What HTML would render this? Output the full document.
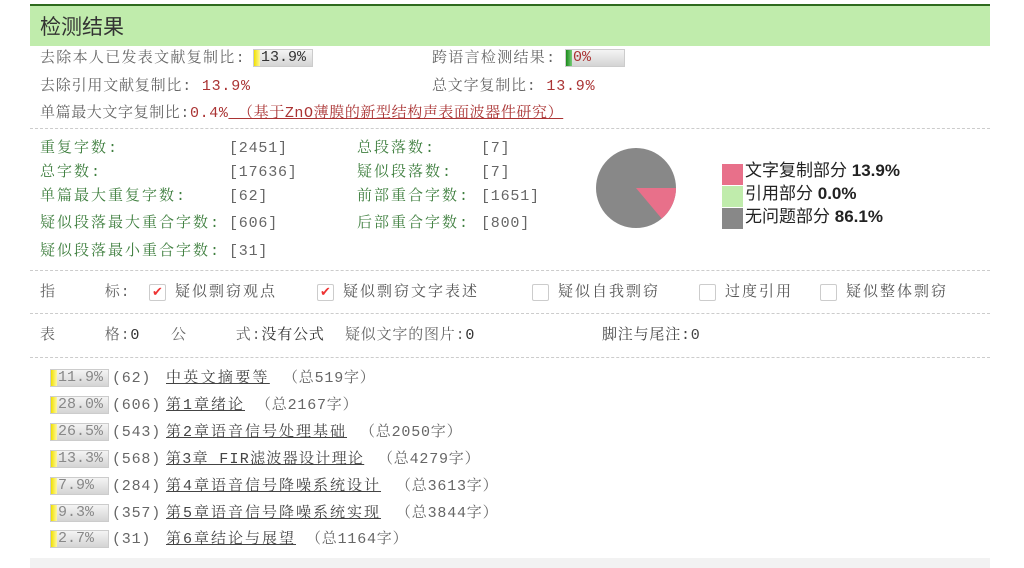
<!DOCTYPE html>
<html><head><meta charset="utf-8"><style>
body{margin:0;width:1024px;height:568px;background:#fff;position:relative;overflow:hidden;font-family:"Liberation Mono","Noto Serif CJK SC",serif;font-size:15px;letter-spacing:0.8px;color:#666}
.a{position:absolute;white-space:nowrap;line-height:18px;margin-top:1px}
.hdr{position:absolute;left:30px;top:4px;width:960px;height:40px;background:#c0ecac;border-top:2px solid #2e6b1e}
.hdr span{position:absolute;left:10px;top:5px;font-size:21px;color:#333;letter-spacing:0;font-family:"Liberation Sans","Noto Sans CJK SC",sans-serif}
.dash{position:absolute;left:30px;width:960px;border-top:1px dashed #ccc}
.red{color:#a33}
.g{color:#3f7f3f}
.bar{position:absolute;height:18px;background:linear-gradient(#f4f4f4,#d4d4d4);border:1px solid #ccc;box-sizing:border-box;color:#888;font-size:15px;line-height:16px;letter-spacing:0}
.bar i{position:absolute;left:0;top:0;bottom:0;width:6px;background:linear-gradient(90deg,#f0e000,#fff8a0)}
.bar b{position:relative;font-weight:normal;padding-left:7px}
.cb{position:absolute;width:17px;height:17px;border:1px solid #ccc;border-radius:2px;box-sizing:border-box;background:#fff}
.u{text-decoration:underline;color:#444;letter-spacing:2px}
</style></head><body>
<div class="hdr"><span>检测结果</span></div>
<div class="a" style="left:40px;top:49px;letter-spacing:1.3px">去除本人已发表文献复制比:</div>
<div class="bar" style="left:253px;top:49px;width:60px"><i></i><b style="color:#333">13.9%</b></div>
<div class="a" style="left:432px;top:49px;letter-spacing:1.3px">跨语言检测结果:</div>
<div class="bar" style="left:565px;top:49px;width:60px"><i style="background:linear-gradient(90deg,#1a8a1a,#7c7)"></i><b class="red">0%</b></div>
<div class="a" style="left:40px;top:77px">去除引用文献复制比: <span class="red">13.9%</span></div>
<div class="a" style="left:432px;top:77px">总文字复制比: <span class="red">13.9%</span></div>
<div class="a" style="left:40px;top:104px;letter-spacing:0.6px">单篇最大文字复制比:<span class="red">0.4%</span><span class="red" style="text-decoration:underline">  （基于ZnO薄膜的新型结构声表面波器件研究） </span></div>
<div class="dash" style="top:128px"></div>
<div class="a g" style="left:40px;top:139px;letter-spacing:2px">重复字数:</div><div class="a" style="left:229px;top:139px">[2451]</div>
<div class="a g" style="left:40px;top:163px;letter-spacing:2px">总字数:</div><div class="a" style="left:229px;top:163px">[17636]</div>
<div class="a g" style="left:40px;top:187px;letter-spacing:2px">单篇最大重复字数:</div><div class="a" style="left:229px;top:187px">[62]</div>
<div class="a g" style="left:40px;top:214px;letter-spacing:2px">疑似段落最大重合字数:</div><div class="a" style="left:229px;top:214px">[606]</div>
<div class="a g" style="left:40px;top:242px;letter-spacing:2px">疑似段落最小重合字数:</div><div class="a" style="left:229px;top:242px">[31]</div>
<div class="a g" style="left:357px;top:139px;letter-spacing:2px">总段落数:</div><div class="a" style="left:481px;top:139px">[7]</div>
<div class="a g" style="left:357px;top:163px;letter-spacing:2px">疑似段落数:</div><div class="a" style="left:481px;top:163px">[7]</div>
<div class="a g" style="left:357px;top:187px;letter-spacing:2px">前部重合字数:</div><div class="a" style="left:481px;top:187px">[1651]</div>
<div class="a g" style="left:357px;top:214px;letter-spacing:2px">后部重合字数:</div><div class="a" style="left:481px;top:214px">[800]</div>
<svg style="position:absolute;left:594px;top:146px" width="86" height="86"><circle cx="42" cy="42" r="40" fill="#888"/><path d="M42 42 L82 42 A40 40 0 0 1 67.7 72.6 Z" fill="#e8708a"/></svg>
<div style="position:absolute;left:722px;top:164px;width:21px;height:21px;background:#e8708a"></div>
<div style="position:absolute;left:722px;top:186px;width:21px;height:21px;background:#c0ecac"></div>
<div style="position:absolute;left:722px;top:208px;width:21px;height:21px;background:#888"></div>
<div class="a" style="left:745px;top:158px;font-family:'Liberation Sans','Noto Sans CJK SC',sans-serif;font-size:17px;letter-spacing:0;line-height:23px;color:#222">文字复制部分 <b>13.9%</b><br>引用部分 <b>0.0%</b><br>无问题部分 <b>86.1%</b></div>
<div class="dash" style="top:270px"></div>
<div class="a" style="left:40px;top:283px">指&nbsp;&nbsp;&nbsp;&nbsp;&nbsp;标:</div>
<div class="cb" style="left:149px;top:284px"></div><div class="a" style="left:152px;top:283px;color:#e33;font-size:13px">✔</div>
<div class="a" style="left:175px;top:283px;letter-spacing:2px;color:#555">疑似剽窃观点</div>
<div class="cb" style="left:317px;top:284px"></div><div class="a" style="left:320px;top:283px;color:#e33;font-size:13px">✔</div>
<div class="a" style="left:343px;top:283px;letter-spacing:2px;color:#555">疑似剽窃文字表述</div>
<div class="cb" style="left:532px;top:284px"></div><div class="a" style="left:558px;top:283px;letter-spacing:2px;color:#555">疑似自我剽窃</div>
<div class="cb" style="left:699px;top:284px"></div><div class="a" style="left:725px;top:283px;letter-spacing:2px;color:#555">过度引用</div>
<div class="cb" style="left:820px;top:284px"></div><div class="a" style="left:846px;top:283px;letter-spacing:2px;color:#555">疑似整体剽窃</div>
<div class="dash" style="top:313px"></div>
<div class="a" style="left:40px;top:326px">表&nbsp;&nbsp;&nbsp;&nbsp;&nbsp;格:<span style="color:#333">0</span></div>
<div class="a" style="left:171px;top:326px">公&nbsp;&nbsp;&nbsp;&nbsp;&nbsp;式:<span style="color:#333">没有公式</span></div>
<div class="a" style="left:345px;top:326px">疑似文字的图片:<span style="color:#333">0</span></div>
<div class="a" style="left:602px;top:326px;color:#444">脚注与尾注:0</div>
<div class="dash" style="top:357px"></div>
<div class="bar" style="left:50px;top:369px;width:59px"><i></i><b>11.9%</b></div><div class="a" style="left:112px;top:369px">(62)</div><div class="a u" style="left:166px;top:369px;letter-spacing:2.3px">中英文摘要等</div><div class="a" style="left:283px;top:369px">（总519字）</div>
<div class="bar" style="left:50px;top:396px;width:59px"><i></i><b>28.0%</b></div><div class="a" style="left:112px;top:396px">(606)</div><div class="a u" style="left:166px;top:396px">第1章绪论</div><div class="a" style="left:256px;top:396px">（总2167字）</div>
<div class="bar" style="left:50px;top:423px;width:59px"><i></i><b>26.5%</b></div><div class="a" style="left:112px;top:423px">(543)</div><div class="a u" style="left:166px;top:423px">第2章语音信号处理基础</div><div class="a" style="left:360px;top:423px">（总2050字）</div>
<div class="bar" style="left:50px;top:450px;width:59px"><i></i><b>13.3%</b></div><div class="a" style="left:112px;top:450px">(568)</div><div class="a u" style="left:166px;top:450px;letter-spacing:1.3px">第3章 FIR滤波器设计理论</div><div class="a" style="left:378px;top:450px">（总4279字）</div>
<div class="bar" style="left:50px;top:477px;width:59px"><i></i><b>7.9%</b></div><div class="a" style="left:112px;top:477px">(284)</div><div class="a u" style="left:166px;top:477px">第4章语音信号降噪系统设计</div><div class="a" style="left:396px;top:477px">（总3613字）</div>
<div class="bar" style="left:50px;top:504px;width:59px"><i></i><b>9.3%</b></div><div class="a" style="left:112px;top:504px">(357)</div><div class="a u" style="left:166px;top:504px">第5章语音信号降噪系统实现</div><div class="a" style="left:396px;top:504px">（总3844字）</div>
<div class="bar" style="left:50px;top:530px;width:59px"><i></i><b>2.7%</b></div><div class="a" style="left:112px;top:530px">(31)</div><div class="a u" style="left:166px;top:530px">第6章结论与展望</div><div class="a" style="left:306px;top:530px">（总1164字）</div>
<div style="position:absolute;left:30px;top:558px;width:960px;height:10px;background:#f2f2f2"></div>
</body></html>
